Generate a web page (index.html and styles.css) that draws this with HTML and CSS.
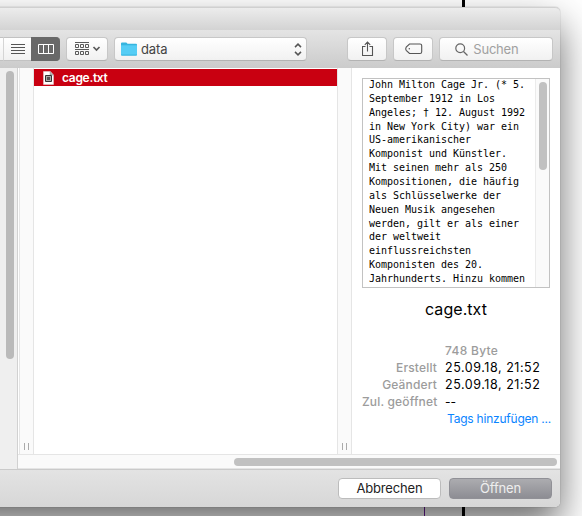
FILE: index.html
```html
<!DOCTYPE html>
<html lang="de">
<head>
<meta charset="utf-8">
<title>Öffnen</title>
<link rel="stylesheet" href="styles.css">
</head>
<body>
<div class="guide black"></div>
<div class="guide purple"></div>
<main class="window">
  <header class="titlebar"></header>
  <nav class="toolbar">
    <div class="segments">
      <span class="segment edge"></span>
      <span class="segment list"><svg width="14" height="11" viewBox="0 0 14 11"><path d="M0 .5h14M0 3.5h14M0 6.5h14M0 9.5h14" stroke="#555" fill="none"/></svg></span>
      <span class="segment active"><svg width="16" height="11" viewBox="0 0 16 11"><path d="M.5.5h15v9H.5zM5.5 0v10M10.5 0v10" stroke="#fff" fill="none"/></svg></span>
    </div>
    <div class="control group">
      <svg width="26" height="14" viewBox="0 0 26 14" fill="none" stroke="#5a5a5a"><path d="M0 .5h14M0 7.5h14M.5 2.5h3v3h-3zM5.5 2.5h3v3h-3zM10.5 2.5h3v3h-3zM.5 9.5h3v3h-3zM5.5 9.5h3v3h-3zM10.5 9.5h3v3h-3z"/><path d="M18.5 5l3 3 3-3" stroke-width="1.7"/></svg>
    </div>
    <div class="control path">
      <svg width="16" height="14" viewBox="0 0 16 14"><path d="M0 1.5Q0 .4 1 .4h4.3l1.3 1.4H15q1 0 1 1V13q0 .7-1 .7H1q-1 0-1-.7z" fill="#36b5df"/><path d="M0 3.3h16V12.6H0z" fill="#55cdf5"/></svg>
      <span class="folder">data</span>
      <svg width="8" height="13" viewBox="0 0 8 13" fill="none" stroke="#555" stroke-width="1.5"><path d="M1 4.1l3-3 3 3M1 8.9l3 3 3-3"/></svg>
    </div>
    <div class="control share"><svg width="12" height="16" viewBox="0 0 12 16" fill="none" stroke="#555" stroke-width="1.1"><path d="M3.5 5.5h-3v9h10v-9h-3M5.5 10.5V1M2.8 3.8L5.5 1l2.7 2.8"/></svg></div>
    <div class="control tag"><svg width="18" height="12" viewBox="0 0 18 12" fill="none" stroke="#555" stroke-width="1.1"><path d="M4.5 1H15q1.7 0 1.7 1.5v6.2q0 1.8-1.7 1.8H4.5L1.2 7.3Q.3 5.8 1.2 4.2z"/><circle cx="4.3" cy="5.7" r=".7" fill="#555" stroke="none"/></svg></div>
    <div class="control search"><svg width="13" height="13" viewBox="0 0 13 13" fill="none" stroke="#666" stroke-width="1.2"><circle cx="5.2" cy="5.2" r="4.4"/><path d="M8.5 8.5l4 4"/></svg><span>Suchen</span></div>
  </nav>
  <section class="content">
    <aside class="sidebar"><div class="sidethumb"></div></aside>
    <div class="browser">
      <div class="columns">
        <div class="splitter first"><i></i></div>
        <div class="files">
          <div class="file">
            <svg width="11" height="14" viewBox="0 0 11 14"><path d="M.5.5h6.8L10.5 4v9.5H.5z" fill="#fff" stroke="#ddd" stroke-width=".5"/><path d="M7.2.5V4h3.3" fill="#bbb" stroke="#777" stroke-width=".5"/><path d="M2.5 4.5h6v6h-6z" fill="#aaa" stroke="#333"/><path d="M4 6h3v3H4z" fill="#555"/></svg>
            <span>cage.txt</span>
          </div>
        </div>
        <div class="splitter second"><i></i></div>
        <article class="preview">
          <div class="document">
            <pre>John Milton Cage Jr. (* 5.
September 1912 in Los
Angeles; † 12. August 1992
in New York City) war ein
US-amerikanischer
Komponist und Künstler.
Mit seinen mehr als 250
Kompositionen, die häufig
als Schlüsselwerke der
Neuen Musik angesehen
werden, gilt er als einer
der weltweit
einflussreichsten
Komponisten des 20.
Jahrhunderts. Hinzu kommen</pre>
            <div class="track"><div class="docthumb"></div></div>
          </div>
          <h1>cage.txt</h1>
          <dl>
            <dt></dt><dd class="size">748 Byte</dd>
            <dt>Erstellt</dt><dd class="date">25.09.18, 21:52</dd>
            <dt>Geändert</dt><dd class="date">25.09.18, 21:52</dd>
            <dt>Zul. geöffnet</dt><dd>--</dd>
          </dl>
          <a class="tags">Tags hinzufügen ...</a>
        </article>
      </div>
      <div class="hscroll"><div class="hthumb"></div></div>
    </div>
  </section>
  <footer>
    <button class="cancel">Abbrechen</button>
    <button class="open">Öffnen</button>
  </footer>
</main>
</body>
</html>
```
FILE: styles.css
```css
* { box-sizing: border-box; }
body {
  margin: 0;
  width: 582px;
  height: 516px;
  overflow: hidden;
  position: relative;
  background: #fff;
  font-family: Inter, "Liberation Sans", sans-serif;
  font-size: 12px;
}
svg { display: block; flex: none; }
.guide { position: absolute; top: 0; height: 516px; }
.black { left: 462px; width: 3px; background: #000; }
.purple { left: 424px; top: 500px; width: 1px; height: 16px; background: #6a1b9a; }
.window {
  position: relative;
  margin: 7px 0 0 -60px;
  padding-left: 60px;
  width: 620px;
  height: 500px;
  border-radius: 5px;
  background: #fff;
  box-shadow: 0 0 1px rgba(0,0,0,.5), 0 18px 38px rgba(0,0,0,.58);
}
.titlebar {
  height: 23px;
  border-top: 1px solid #d0d0d0;
  border-radius: 0 5px 0 0;
  background: linear-gradient(#ececec, #d3d3d3);
}
.toolbar {
  height: 38px;
  padding: 7px 7px 0 0;
  display: flex;
  background: linear-gradient(#e4e4e4, #cbcbcb);
}
.segments { display: flex; width: 60px; height: 24px; }
.segment {
  display: flex;
  align-items: center;
  justify-content: center;
  border: solid #c2c2c2;
  border-width: 1px 0;
  background: linear-gradient(#fff, #f1f1f1);
}
.edge { width: 3px; }
.list { width: 28px; border-left: 1px solid #d5d5d5; padding-left: 1px; }
.active { width: 29px; background: #686868; border-color: #686868; border-radius: 0 4px 4px 0; }
.control {
  display: flex;
  align-items: center;
  justify-content: center;
  height: 24px;
  border: 1px solid #c7c7c7;
  border-bottom-color: #b3b3b3;
  border-radius: 4px;
  background: linear-gradient(#fff, #f1f1f1);
}
.group { margin-left: 6px; width: 42px; justify-content: flex-start; padding-left: 8px; }
.path { margin-left: 6px; width: 194px; padding: 0 4px 0 6px; }
.folder { margin-left: 4px; flex: 1; font-size: 13px; letter-spacing: -.1px; color: #444; }
.share { margin-left: 40px; width: 40px; }
.share svg { margin-left: 1px; }
.tag { margin-left: 6px; width: 40px; }
.tag svg { margin-left: 1px; }
.search { margin-left: 6px; width: 114px; justify-content: flex-start; padding-left: 15px; font-size: 13px; letter-spacing: -.2px; color: #a0a0a0; }
.search span { margin-left: 5px; }
.content { display: flex; height: 401px; }
.sidebar { width: 18px; padding: 3px 3px 0 6px; background: #efefef; border-right: 1px solid #d1d1d1; }
.sidethumb { width: 8px; height: 288px; border-radius: 4px; background: #bababa; }
.browser { flex: 1; }
.columns { display: flex; height: 386px; }
.splitter { width: 15px; display: flex; align-items: flex-end; justify-content: center; padding-bottom: 4px; border: solid #e5e5e5; border-width: 0 1px; background: #fafafa; }
.splitter i { width: 5px; height: 7px; border: solid #aaa; border-width: 0 1px; }
.first { margin-left: 1px; }
.files { width: 303px; padding-top: 1px; }
.file { height: 17px; display: flex; align-items: center; padding-left: 9px; background: #c90011; color: #fff; font-weight: 600; letter-spacing: -.3px; }
.file span { margin-left: 8px; }
.preview { width: 208px; padding: 10px 9px 0 10px; }
.document { width: 188px; height: 210px; display: flex; justify-content: space-between; border: 1px solid #c2c2c2; overflow: hidden; }
pre { margin: -1px 0 0 6px; font: 10px/13.86px "DejaVu Sans Mono", "Liberation Mono", monospace; letter-spacing: -.02px; color: #000; }
.track { width: 14px; padding: 3px 2px 0 3px; border-left: 1px solid #ebebeb; background: #fafafa; }
.docthumb { width: 8px; height: 88px; border-radius: 4px; background: #c1c1c1; }
h1 { margin: 11px 1px 0 0; font-size: 16px; line-height: 20px; font-weight: 400; text-align: center; letter-spacing: .05px; color: #000; }
dl { margin: 23px 0 0; display: grid; grid-template-columns: 75px 1fr; column-gap: 8px; grid-auto-rows: 17px; line-height: 17px; white-space: nowrap; }
dt { text-align: right; font-weight: 500; letter-spacing: .16px; color: #9c9c9c; }
dd { margin: 0; color: #000; }
.date { font-size: 12.5px; letter-spacing: .55px; }
.size { color: #9c9c9c; font-weight: 500; letter-spacing: .3px; }
.tags { display: block; margin: 0 -3px 0 85px; line-height: 17px; letter-spacing: -.22px; white-space: nowrap; color: #0a84ff; }
.hscroll { height: 15px; padding: 3px 3px 0 216px; border: solid #e5e5e5; border-width: 1px 0; background: #fafafa; }
.hthumb { height: 8px; border-radius: 4px; background: #c1c1c1; }
footer { height: 38px; padding: 8px 8px 0 0; display: flex; justify-content: flex-end; gap: 8px; border-top: 1px solid #cacaca; border-radius: 0 0 5px 0; background: linear-gradient(#e3e3e3, #d7d7d7); }
button { height: 21px; width: 103px; padding: 0; border: 1px solid #bcbcbc; border-radius: 4px; background: #fff; color: #222; font: 13px/19px Inter, sans-serif; letter-spacing: -.15px; }
.open { border-color: #909096; background: linear-gradient(#acacb0, #8d8d93); color: #eee; }
```
